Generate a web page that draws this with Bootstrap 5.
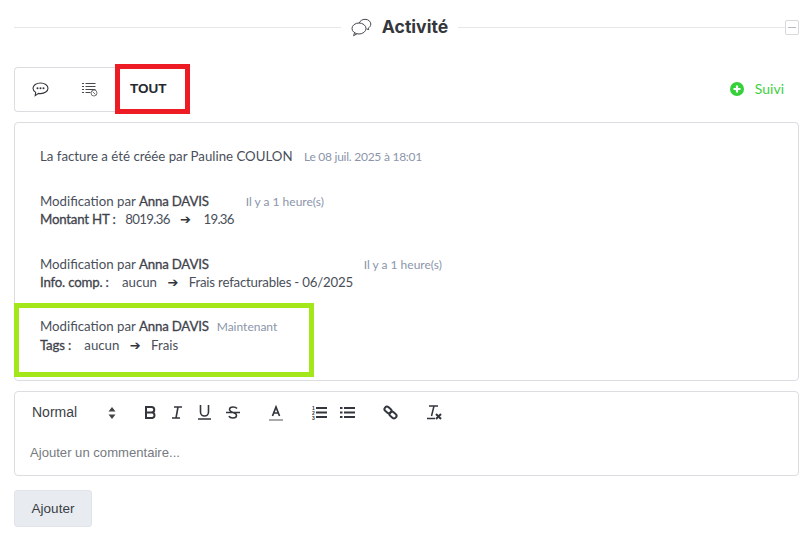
<!DOCTYPE html>
<html lang="fr"><head><meta charset="utf-8">
<link href="https://cdn.jsdelivr.net/npm/bootstrap@5.3.0/dist/css/bootstrap.min.css" rel="stylesheet">
<style>
body{background:#fff;font-family:"Lato","Noto Sans",sans-serif;font-size:13.25px;color:#4a4f5a;width:812px;height:542px;overflow:hidden}
.page-wrap{padding:0 13px 0 14px}
.head-row{height:54px;gap:10px}
.head-line{flex:1;height:1px;background:#e6e7e9}
.head-title{font-family:"Inter",sans-serif;font-weight:700;font-size:17.6px;color:#34373c;line-height:1}
.fold-box{width:14px;height:15px;border:1px solid #d8d9db;border-radius:2px;margin-left:-10px;background:#fff}
.fold-box::after{content:"";width:8px;height:1px;background:#b9babd}
.tab-bar{height:68px;padding-top:10px}
.tab-group{width:102px;height:45px;margin-top:3px;border:1px solid #dcdde0;border-right:0;border-radius:4px 0 0 4px}
.tab-cell{width:50px}
.tab-all{box-sizing:border-box;width:75px;height:50px;margin-left:-1px;border:5px solid #ed1c24;background:#fff;padding:1px 0 0 10px;font-family:"Liberation Sans",sans-serif;font-size:13.5px;font-weight:700;color:#25282d;position:relative}
.follow-link{color:#3ecf3e;font-size:14px;gap:11px;margin-right:15px;margin-top:14px}
.feed-box{height:259px;border:1px solid #dcdde0;border-radius:4px;position:relative;padding:24px 0 0 0}
.feed-item{padding-left:25px;line-height:19px;color:#4a4f5a;white-space:nowrap}
.feed-item strong{font-weight:400;color:#3f434c;-webkit-text-stroke:.3px #3f434c;letter-spacing:-.2px}
.feed-item strong.field-name{margin-right:6.500px}
.feed-item strong.field-short{margin-right:3px}
.num-val{letter-spacing:-.7px}
.num-next{margin-left:2px}
.long-val{letter-spacing:-.2px}
.when{font-size:12px;color:#8b95aa;line-height:1}
.date-when{letter-spacing:-.25px}
.arrow-mark{padding:0 7px;font-family:"DejaVu Sans",sans-serif;font-size:13px;color:#33363c;line-height:1}
.item-b{margin-top:26px;line-height:18px}
.item-c{margin-top:27px;line-height:18px}
.item-d{box-sizing:border-box;width:300px;height:74px;margin:12px 0 0 -1px;padding:9px 0 0 21px;border:5px solid #a3e61a}
.when-b{margin-left:37px}
.when-c{margin-left:155px}
.editor-box{height:85px;margin-top:10px;border:1px solid #dcdde0;border-radius:4px;font-family:"Liberation Sans",sans-serif}
.tool-row{height:41px;padding-left:17px;color:#3c3f45;font-size:14px}
.tool-row svg{display:block}
.tool-label{width:76px}
.gap-b{margin-left:28px}
.gap-i{margin-left:14px}
.gap-u,.gap-s{margin-left:15px}
.gap-a,.gap-ol{margin-left:29px}
.gap-ul{margin-left:13px}
.gap-link{margin-left:28px}
.gap-tx{margin-left:29px}
.num-mark{font-family:"Liberation Sans",sans-serif;font-size:5px;font-weight:700}
.editor-text{padding:10px 0 0 15px;color:#767a80;font-size:13.1px}
.add-btn{margin-top:14px;width:78px;height:37px;background:#e8ebf0;border:1px solid #e1e4e9;border-radius:3px;color:#3a3d43;font-family:"Liberation Sans",sans-serif;font-size:13.5px;padding:1px 0 0}
</style></head>
<body>
<div class="page-wrap">
  <div class="head-row d-flex align-items-center">
    <div class="head-line"></div>
    <svg width="21" height="19" viewBox="0 0 21 19" fill="none" stroke="#45484d" stroke-width="1"><path d="M8 5.200c1-2.400 3.400-3.900 6-3.900 3.200 0 5.800 2.100 5.800 4.800 0 1.700-1 3.100-2.500 4l.4 1.600-2.200-.8"/><ellipse cx="8" cy="10.500" rx="7" ry="5.500" fill="#fff"/><path d="M3.500 14.800l-.9 2.900 3.300-1.800"/></svg>
    <div class="head-title">Activité</div>
    <div class="head-line"></div>
    <div class="fold-box d-flex align-items-center justify-content-center"></div>
  </div>
  <div class="tab-bar d-flex align-items-start">
    <div class="tab-group d-flex align-items-center">
      <div class="tab-cell d-flex justify-content-center">
        <svg width="17" height="15" viewBox="0 0 17 15" fill="none" stroke="#33363c" stroke-width="1.100"><path d="M8.500 1C4.400 1 1 3.300 1 6.300c0 1.700 1.100 3.100 2.700 4.100l-.5 3.300 3.400-2.300c.6.100 1.300.2 1.900.2 4.100 0 7.500-2.400 7.500-5.300S12.600 1 8.500 1z"/><circle cx="5.500" cy="6.300" r="1" fill="#33363c" stroke="none"/><circle cx="8.500" cy="6.300" r="1" fill="#33363c" stroke="none"/><circle cx="11.500" cy="6.300" r="1" fill="#33363c" stroke="none"/></svg>
      </div>
      <div class="tab-cell d-flex justify-content-center">
        <svg width="16" height="15" viewBox="0 0 16 15" fill="none" stroke="#45484d" stroke-width="1"><path d="M0 1.500h2M0 4.500h2M0 7.500h2M0 10.500h2M3.500 1.500h10M3.500 4.500h10M3.500 7.500h10M3.500 10.500h5"/><circle cx="12" cy="11" r="3" fill="#fff" stroke="#777"/><path d="M10.500 9.500l3 3" stroke="#777"/></svg>
      </div>
    </div>
    <div class="tab-all d-flex align-items-center">TOUT</div>
    <a class="follow-link ms-auto d-flex align-items-center text-decoration-none" href="#">
      <svg width="14" height="14" viewBox="0 0 14 14"><circle cx="7" cy="7" r="7" fill="#36d03b"/><path d="M7 3.500v7M3.500 7h7" stroke="#fff" stroke-width="2.200"/></svg>
      <span>Suivi</span>
    </a>
  </div>
  <div class="feed-box">
    <div class="feed-item">La facture a été créée par Pauline COULON <span class="when date-when ms-2">Le 08 juil. 2025 à 18:01</span></div>
    <div class="feed-item item-b">Modification par <strong>Anna DAVIS</strong><span class="when when-b">Il y a 1 heure(s)</span><br><strong class="field-short">Montant HT :</strong>&nbsp; <span class="num-val">8019.36</span> <span class="arrow-mark">➔</span> <span class="num-val num-next">19.36</span></div>
    <div class="feed-item item-c">Modification par <strong>Anna DAVIS</strong><span class="when when-c">Il y a 1 heure(s)</span><br><strong class="field-name">Info. comp. :</strong>&nbsp; aucun <span class="arrow-mark">➔</span> <span class="long-val">Frais refacturables - 06/2025</span></div>
    <div class="feed-item item-d">Modification par <strong>Anna DAVIS</strong><span class="when ms-2">Maintenant</span><br><strong class="field-name">Tags :</strong>&nbsp; aucun <span class="arrow-mark">➔</span> Frais</div>
  </div>
  <div class="editor-box">
    <div class="tool-row d-flex align-items-center">
      <span class="tool-label">Normal</span>
      <svg width="8" height="12" viewBox="0 0 8 12" fill="#444"><path d="M4 0l3.500 4.500h-7zM4 12L.5 7.500h7z"/></svg>
      <svg class="gap-b" width="13" height="13" viewBox="0 0 13 13" fill="none" stroke="#33363c" stroke-width="2"><path d="M2 1h5.500a2.700 2.700 0 0 1 0 5.500H2zM2 6.500h6.200a2.800 2.800 0 0 1 0 5.500H2z"/></svg>
      <svg class="gap-i" width="12" height="13" viewBox="0 0 12 13" fill="none" stroke="#33363c" stroke-width="1.600"><path d="M3 1h8M1 12h8M7 1L5 12"/></svg>
      <svg class="gap-u" width="13" height="15" viewBox="0 0 13 15" fill="none" stroke="#33363c" stroke-width="1.600"><path d="M2.500 0v7a4 4 0 0 0 8 0V0M0 14h13"/></svg>
      <svg class="gap-s" width="14" height="13" viewBox="0 0 14 13" fill="none" stroke="#33363c" stroke-width="1.500"><path d="M11 2.500C10 1 9 1 7 1 4.500 1 3.500 2 3.500 3.500S5 5.800 7 6.500s3.500 1.200 3.500 3S9 12 7 12c-2 0-3.500-.5-4-2M0 6.500h14"/></svg>
      <svg class="gap-a" width="14" height="16" viewBox="0 0 14 16" fill="none" stroke="#33363c" stroke-width="1.700"><path d="M3.500 11L7 2l3.500 9M4.700 8h4.600"/><path d="M0 15h14" stroke="#aaa" stroke-width="2"/></svg>
      <svg class="gap-ol" width="15" height="15" viewBox="0 0 15 15" fill="#33363c"><rect x="4" y="2" width="11" height="2"/><rect x="4" y="6.500" width="11" height="2"/><rect x="4" y="11" width="11" height="2"/><text class="num-mark" x="0" y="4.500">1</text><text class="num-mark" x="0" y="9.500">2</text><text class="num-mark" x="0" y="14.500">3</text></svg>
      <svg class="gap-ul" width="15" height="13" viewBox="0 0 15 13" fill="#33363c"><rect x="4" y="1" width="11" height="2"/><rect x="4" y="5.500" width="11" height="2"/><rect x="4" y="10" width="11" height="2"/><rect x="0" y="1" width="2.500" height="2"/><rect x="0" y="5.500" width="2.500" height="2"/><rect x="0" y="10" width="2.500" height="2"/></svg>
      <svg class="gap-link" width="15" height="15" viewBox="0 0 15 15" fill="none" stroke="#33363c" stroke-width="2"><rect x="-3.800" y="-2.500" width="7.600" height="5" rx="2.500" transform="translate(5 5) rotate(40)"/><rect x="-3.800" y="-2.500" width="7.600" height="5" rx="2.500" transform="translate(10 10) rotate(40)"/></svg>
      <svg class="gap-tx" width="15" height="15" viewBox="0 0 15 15" fill="none" stroke="#33363c" stroke-width="1.500"><path d="M2 1h9M7 1L4.500 11M0 13.500h8"/><path d="M9 9l5 5M14 9l-5 5" stroke-width="2"/></svg>
    </div>
    <div class="editor-text">Ajouter un commentaire...</div>
  </div>
  <button type="button" class="btn add-btn d-block">Ajouter</button>
</div>
</body></html>
